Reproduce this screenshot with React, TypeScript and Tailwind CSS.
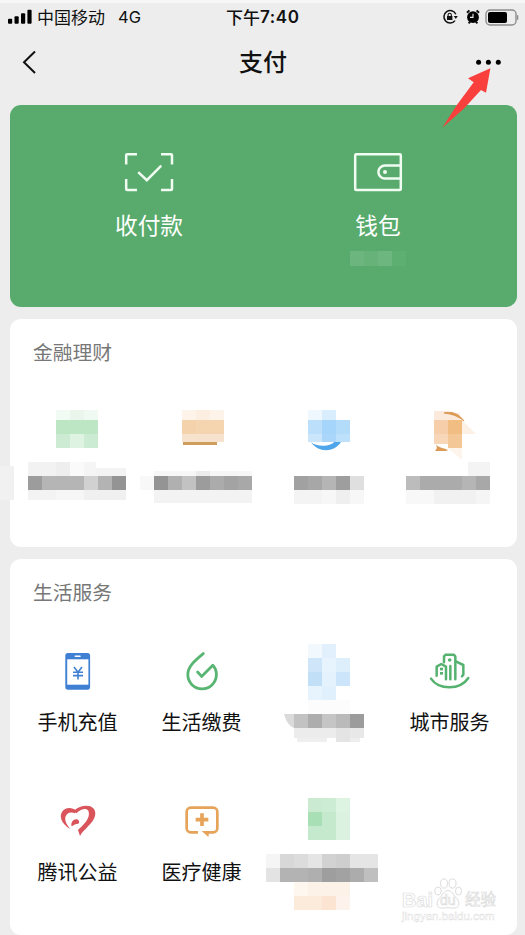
import type { ReactNode } from "react";

// x, y, width, height, fill
type Block = [number, number, number, number, string];

const MosaicTile = ({
  blocks,
  height,
  children,
}: {
  blocks: Block[];
  height: number;
  children?: ReactNode;
}) => (
  <svg
    width="124"
    height={height}
    viewBox={`0 0 124 ${height}`}
    className="block"
    shapeRendering="crispEdges"
  >
    {blocks.map(([x, y, w, h, fill], i) => (
      <rect key={i} x={x} y={y} width={w} height={h} fill={fill} />
    ))}
    <g shapeRendering="auto">{children}</g>
  </svg>
);

const financeOne: Block[] = [
  [41, 10, 14, 10, "#f1faf3"],
  [55, 10, 14, 10, "#eaf6ec"],
  [69, 10, 14, 10, "#f0f9f2"],
  [41, 20, 42, 14, "#bce6c4"],
  [41, 34, 14, 14, "#cdebd3"],
  [55, 34, 14, 14, "#dff3e3"],
  [69, 34, 14, 14, "#cbebd2"],
  [13, 62, 28, 14, "#f2f2f2"],
  [41, 62, 14, 14, "#eeeeee"],
  [55, 62, 14, 14, "#fafafa"],
  [69, 62, 12, 14, "#f5f5f5"],
  [81, 68, 30, 8, "#f3f3f3"],
  [13, 76, 14, 14, "#9c9c9c"],
  [27, 76, 42, 14, "#b5b5b5"],
  [69, 76, 14, 14, "#d1d1d1"],
  [83, 76, 14, 14, "#b3b3b3"],
  [97, 76, 14, 14, "#949494"],
  [13, 90, 28, 10, "#f3f3f3"],
  [41, 90, 28, 10, "#f6f6f6"],
  [69, 90, 42, 10, "#f0f0f0"],
];

const financeTwo: Block[] = [
  [43, 10, 14, 10, "#fef4ea"],
  [57, 10, 14, 10, "#fcefe2"],
  [71, 10, 14, 10, "#fef3e8"],
  [43, 20, 14, 14, "#f4d2ac"],
  [57, 20, 28, 14, "#f5d5b0"],
  [43, 34, 42, 8, "#f7e2cd"],
  [44, 42, 34, 3, "#cf9d5e"],
  [15, 71, 42, 5, "#f7f7f7"],
  [57, 71, 14, 5, "#ececec"],
  [71, 71, 42, 5, "#f6f6f6"],
  [1, 76, 14, 14, "#f8f8f8"],
  [15, 76, 14, 14, "#949494"],
  [29, 76, 14, 14, "#b0b0b0"],
  [43, 76, 14, 14, "#c2c2c2"],
  [57, 76, 14, 14, "#9c9c9c"],
  [71, 76, 14, 14, "#ababab"],
  [85, 76, 14, 14, "#a3a3a3"],
  [99, 76, 14, 14, "#a8a8a8"],
  [15, 90, 98, 13, "#f3f3f3"],
];

const financeThree: Block[] = [
  [45, 10, 14, 10, "#eff8fe"],
  [59, 10, 14, 10, "#d8edfd"],
  [45, 20, 14, 14, "#bcdffb"],
  [59, 20, 14, 14, "#a5d5fa"],
  [73, 20, 14, 14, "#b3dbfa"],
  [45, 34, 14, 8, "#cbe5fa"],
  [59, 34, 14, 8, "#a9d6fa"],
  [73, 34, 14, 8, "#bde0fb"],
  [31, 76, 14, 14, "#a1a1a1"],
  [45, 76, 14, 14, "#a7a7a7"],
  [59, 76, 14, 14, "#b5b5b5"],
  [73, 76, 14, 14, "#9e9e9e"],
  [87, 76, 14, 14, "#dfdfdf"],
  [31, 90, 28, 14, "#f4f4f4"],
  [59, 90, 14, 14, "#f7f7f7"],
  [73, 90, 14, 14, "#efefef"],
  [87, 90, 14, 14, "#f7f7f7"],
];

const financeFour: Block[] = [
  [47, 11, 14, 9, "#fbeadb"],
  [61, 13, 12, 7, "#fbeadb"],
  [47, 20, 14, 14, "#f6cfaa"],
  [61, 20, 14, 14, "#f1bd83"],
  [47, 34, 14, 10, "#f7d7b7"],
  [61, 34, 14, 14, "#f3c796"],
  [81, 62, 22, 14, "#f4f4f4"],
  [19, 76, 14, 14, "#bcbcbc"],
  [33, 76, 42, 14, "#ababab"],
  [75, 76, 14, 14, "#b5b5b5"],
  [89, 76, 14, 14, "#a8a8a8"],
  [19, 90, 28, 14, "#f8f8f8"],
  [47, 90, 42, 14, "#f1f1f1"],
  [89, 90, 14, 14, "#f5f5f5"],
];

const serviceThree: Block[] = [
  [45, 4, 14, 14, "#f2f9fe"],
  [59, 4, 14, 14, "#e1f0fc"],
  [45, 18, 14, 14, "#cee5fa"],
  [59, 18, 14, 14, "#e8f4fd"],
  [73, 18, 14, 14, "#deeffc"],
  [45, 32, 14, 14, "#c2dff8"],
  [59, 32, 14, 14, "#e4f2fd"],
  [73, 32, 14, 14, "#cce5fb"],
  [45, 46, 14, 14, "#e8f4fd"],
  [59, 46, 14, 14, "#e0f0fc"],
  [45, 60, 42, 14, "#fcfcfc"],
  [31, 74, 14, 14, "#c2c2c2"],
  [45, 74, 14, 14, "#adadad"],
  [59, 74, 14, 14, "#c5c5c5"],
  [73, 74, 14, 14, "#bababa"],
  [87, 74, 14, 14, "#9c9c9c"],
  [31, 88, 42, 10, "#ececec"],
  [73, 88, 14, 14, "#e4e4e4"],
  [87, 88, 14, 10, "#e8e8e8"],
  [34, 98, 30, 4, "#efefef"],
  [87, 98, 10, 4, "#eeeeee"],
];

const serviceSeven: Block[] = [
  [45, 8, 14, 14, "#caebd1"],
  [59, 8, 14, 14, "#cdecd4"],
  [73, 8, 14, 14, "#def4e2"],
  [45, 22, 14, 14, "#a9dfb5"],
  [59, 22, 14, 14, "#c4e9cc"],
  [73, 22, 14, 14, "#daf2df"],
  [45, 36, 28, 14, "#c5e9cd"],
  [73, 36, 14, 14, "#dcf2e0"],
  [3, 64, 14, 14, "#f5f5f5"],
  [17, 64, 14, 14, "#d8d8d8"],
  [31, 64, 14, 14, "#dcdcdc"],
  [45, 64, 14, 14, "#e5e5e5"],
  [59, 64, 14, 14, "#d2d2d2"],
  [73, 64, 14, 14, "#cecece"],
  [87, 64, 28, 14, "#e5e5e5"],
  [3, 78, 14, 14, "#e3e3e3"],
  [17, 78, 28, 14, "#b3b3b3"],
  [45, 78, 14, 14, "#afafaf"],
  [59, 78, 14, 14, "#9e9e9e"],
  [73, 78, 14, 14, "#a2a2a2"],
  [87, 78, 14, 14, "#acacac"],
  [101, 78, 14, 14, "#bfbfbf"],
  [31, 92, 14, 14, "#fef7f0"],
  [45, 92, 42, 14, "#fdf2e7"],
  [31, 106, 28, 14, "#fcebda"],
  [59, 106, 14, 14, "#fce4d2"],
  [73, 106, 14, 14, "#fef3ec"],
];

const PhoneIcon = () => (
  <svg width="44" height="44" viewBox="0 0 44 44">
    <rect x="10.3" y="4" width="24.8" height="36.7" rx="2.6" fill="#3f80d4" />
    <rect x="12.2" y="10.3" width="21.2" height="25.4" fill="#fff" />
    <path d="M20.3 7.2H25" stroke="#fff" strokeWidth="1.5" strokeLinecap="round" />
    <path
      d="M19 18l4 5.2 4-5.2M23 23v7.5M18 23.2h10M18 26.6h10"
      fill="none"
      stroke="#3f80d4"
      strokeWidth="1.6"
    />
  </svg>
);

const DropIcon = () => (
  <svg width="44" height="44" viewBox="0 0 44 44">
    <path
      d="M24.3 4.6C16 11.4 8.8 17.5 8.8 25.6a14.3 14.3 0 0 0 28.6 0c0-3.6-1.3-6.9-3.6-9.3L22.6 27.4l-4-4.4"
      fill="none"
      stroke="#58b572"
      strokeWidth="2.8"
      strokeLinecap="round"
      strokeLinejoin="round"
    />
  </svg>
);

const CityIcon = () => (
  <svg width="44" height="44" viewBox="0 0 132 132">
    <g
      fill="none"
      stroke="#55b26f"
      strokeWidth="7.5"
      strokeLinecap="round"
      strokeLinejoin="round"
    >
      <path d="M12 89c24 35 87 35 112-2" />
      <path d="M29 80V53l14-8 14 8v38" />
      <path d="M51 40V22l5-5h24l5 5v69M70 51v40" />
      <path d="M88 38l21 10v29l-4 5" />
    </g>
    <g fill="#55b26f">
      <circle cx="68" cy="33" r="5.5" />
      <rect x="39" y="56" width="9" height="8" />
      <rect x="39" y="69" width="9" height="8" />
    </g>
  </svg>
);

const HeartIcon = () => (
  <svg width="44" height="44" viewBox="0 0 132 132" fill="#d9545b">
    <path d="M64 36C52 24 32 25 23 36 11 50 18 74 46 90 36 78 29 68 31 55 34 42 46 37 60 43z" />
    <path d="M57 35c14-14 36-18 49-13 18 8 19 27 7 44-10 15-28 27-38 45l-6-18c14-13 28-26 32-42 3-14-3-22-13-21-10 1-17 7-24 13z" />
    <path d="M56 63c5-4 14-3 16 3 2 6-2 10-8 9-4 0-7 4-14 7-3-6 0-15 6-19z" />
  </svg>
);

const MedicalIcon = () => (
  <svg width="44" height="44" viewBox="0 0 132 132">
    <path
      d="M57 100H35a12 12 0 0 1-12-12V38a12 12 0 0 1 12-12h68a12 12 0 0 1 12 12v50a12 12 0 0 1-12 12H84"
      fill="none"
      stroke="#e6a35a"
      strokeWidth="8"
    />
    <path d="M68 96h23l-3 18z" fill="#e6a35a" />
    <path d="M69 43v38M50 62h38" stroke="#e6a35a" strokeWidth="11" />
  </svg>
);

const services = [
  { name: "手机充值", icon: <PhoneIcon /> },
  { name: "生活缴费", icon: <DropIcon /> },
  { blocks: serviceThree },
  { name: "城市服务", icon: <CityIcon /> },
  { name: "腾讯公益", icon: <HeartIcon /> },
  { name: "医疗健康", icon: <MedicalIcon /> },
  { blocks: serviceSeven },
];

const StatusBar = () => (
  <div className="flex h-[35px] items-center border-t-[3px] border-[#f7f7f7] pb-[4px] pl-2 text-[17px] leading-none text-[#111]">
    <svg width="25" height="16" viewBox="0 0 25 16" className="shrink-0">
      <rect x="0" y="9.7" width="4.2" height="5" rx="1" />
      <rect x="6.5" y="7.2" width="4.2" height="7.5" rx="1" />
      <rect x="13" y="4.2" width="4.2" height="10.5" rx="1" />
      <rect x="19.4" y="0.7" width="4.2" height="14" rx="1" />
    </svg>
    <div className="-mt-[2px] ml-[4px] w-[81px] whitespace-nowrap">中国移动</div>
    <div className="w-[108px] font-['Inter','Noto_Sans_CJK_SC',sans-serif] text-[16.5px]">
      4G
    </div>
    <div className="flex w-[216px] items-center font-medium">
      <span className="-mt-[2px]">下午</span>
      <span className="font-['Inter',sans-serif] text-[17px] font-semibold tracking-[0.6px]">
        7:40
      </span>
    </div>
    <svg width="16" height="16" viewBox="0 0 16 16" fill="none" stroke="#111">
      <path d="M13.8 5.2A6.2 6.2 0 1 0 13 11.6" strokeWidth="1.5" />
      <path d="M11.8 7h4l-2 3z" fill="#111" stroke="none" />
      <rect x="5" y="7" width="5.4" height="4" fill="#111" stroke="none" />
      <path d="M6.1 7.2V5.8a1.6 1.6 0 0 1 3.2 0v1.4" strokeWidth="1.1" />
    </svg>
    <svg width="14" height="16" viewBox="0 0 14 16" className="ml-[8px]">
      <circle cx="7" cy="8.2" r="5.9" />
      <path
        d="M1 3.8l2.4-2.4M13 3.8l-2.4-2.4M2.6 14.4l1.8-2M11.4 14.4l-1.8-2"
        stroke="#111"
        strokeWidth="2"
      />
      <path d="M7 4.8v3.6H4" fill="none" stroke="#ededed" strokeWidth="1.1" />
    </svg>
    <svg width="34" height="17" viewBox="0 0 34 17" className="ml-[5px]">
      <rect
        x="1"
        y="1"
        width="30"
        height="15"
        rx="4"
        fill="none"
        stroke="#8d8d8d"
        strokeWidth="1.4"
      />
      <rect x="3" y="3" width="19" height="11" rx="2" />
      <path d="M32.6 6.2v4.6" stroke="#8d8d8d" strokeWidth="1.4" />
    </svg>
  </div>
);

const App = () => {
  return (
    <div className="relative h-[935px] w-[525px] overflow-hidden bg-[#ededed] font-['Noto_Sans_CJK_SC',sans-serif]">
      <StatusBar />

      <header className="flex h-[70px] items-start justify-between pr-[22px] pl-[22px] pt-[13px]">
        <svg width="48" height="28" viewBox="0 0 48 28" fill="none">
          <path d="M13 3.5L2 14.2 13 25" stroke="#111" strokeWidth="2" />
        </svg>
        <h1 className="-mt-px pl-px text-2xl leading-[28px] font-medium text-[#111]">
          支付
        </h1>
        <svg width="48" height="28" viewBox="0 0 48 28">
          <circle cx="23.6" cy="14.3" r="2.5" />
          <circle cx="33.4" cy="14.3" r="2.5" />
          <circle cx="43.3" cy="14.3" r="2.5" />
        </svg>
      </header>

      <main className="flex flex-col gap-3 pl-[10px]">
        <section className="flex h-[202px] w-[507px] rounded-[11px] bg-[#58ab6c] pl-[25px] text-[22.7px] leading-[30px] text-white">
          <div className="flex w-[228px] flex-col items-center pt-[47px]">
            <svg
              width="50"
              height="40"
              viewBox="0 0 50 40"
              fill="none"
              stroke="#f0fbf2"
              strokeWidth="2.5"
            >
              <path d="M2.2 12.6V3.2a1 1 0 0 1 1-1H13M37 2.2h10a1 1 0 0 1 1 1v9.4M48 27v10a1 1 0 0 1-1 1H37M13 38H3.2a1 1 0 0 1-1-1V27" />
              <path d="M14.2 20.2l8.6 8 14.5-14.6" />
            </svg>
            <div className="mt-[18px]">收付款</div>
          </div>
          <div className="flex w-[230px] flex-col items-center pt-[47px]">
            <svg
              width="50"
              height="40"
              viewBox="0 0 50 40"
              fill="none"
              stroke="#f0fbf2"
              strokeWidth="2.5"
            >
              <rect x="2.2" y="2.2" width="45.6" height="35.8" rx="1" />
              <path d="M47.8 13.4H32a6.6 6.6 0 0 0 0 13.2h15.8" />
              <circle cx="32" cy="20" r="2" fill="#f0fbf2" stroke="none" />
            </svg>
            <div className="mt-[18px]">钱包</div>
            <div className="mt-[11px] flex h-[15px] w-[56px]">
              <div className="w-[14px] bg-[#6cb57e]" />
              <div className="w-[14px] bg-[#66b279]" />
              <div className="w-[14px] bg-[#6eb680]" />
              <div className="w-[14px] bg-[#5dae71]" />
            </div>
          </div>
        </section>

        <section className="h-[228px] w-[507px] rounded-[11px] bg-white">
          <h2 className="pt-[21px] pl-[23px] text-[19.8px] leading-6 text-[#777]">
            金融理财
          </h2>
          <div className="mt-[36px] grid grid-cols-4 pr-[6px] pl-[5px]">
            <MosaicTile blocks={financeOne} height={110} />
            <MosaicTile blocks={financeTwo} height={110} />
            <MosaicTile blocks={financeThree} height={110}>
              <path
                d="M48 42c5 5 19 5 23 0h7c-7 11-23 11-30 0z"
                fill="#4fa6ea"
              />
            </MosaicTile>
            <MosaicTile blocks={financeFour} height={110}>
              <path d="M75 20l14 14H75z" fill="#fcf1e4" />
              <path d="M61 48h14v12z" fill="#fdf5ec" />
              <path
                d="M57 13c7-2 14 0 20 8-6-5-12-7-20-8z"
                fill="#dc9a55"
                stroke="#dc9a55"
              />
              <path d="M48 51l2-3-1-3c4 3 8 3 12 5l-2 1z" fill="#dc9a55" />
            </MosaicTile>
          </div>
        </section>

        <section className="h-[376px] w-[507px] rounded-[11px] bg-white">
          <h2 className="pt-[21px] pl-[23px] text-[19.8px] leading-6 text-[#777]">
            生活服务
          </h2>
          <div className="mt-[36px] grid auto-rows-[150px] grid-cols-4 pr-[6px] pl-[5px]">
            {services.map((item, i) =>
              item.blocks ? (
                <MosaicTile key={i} blocks={item.blocks} height={150}>
                  {i === 2 && (
                    <path d="M21 74h10v14c-5-2-8-7-10-14z" fill="#dadada" />
                  )}
                </MosaicTile>
              ) : (
                <div key={i} className="flex flex-col items-center pt-[9px]">
                  {item.icon}
                  <div className="mt-[17px] pl-px text-[20px] leading-6 whitespace-nowrap text-[#111]">
                    {item.name}
                  </div>
                </div>
              )
            )}
          </div>
        </section>
      </main>

      {/* smudge on the left page edge */}
      <div className="absolute top-[466px] left-0 h-[34px] w-[14px] bg-[#f1f1f1]" />

      {/* pointer to the menu dots */}
      <svg
        width="52"
        height="64"
        viewBox="0 0 52 64"
        className="absolute top-[66px] left-[441px]"
      >
        <path
          d="M49.4 2.2L27 12.3l5.7 4L15.5 39.5 1.3 61.8 23 42.5 40 24l5 2.8z"
          fill="#f9403c"
        />
      </svg>

      {/* watermark */}
      <div className="absolute top-[876px] left-[402px] w-[98px] font-['Liberation_Sans','Noto_Sans_CJK_SC',sans-serif] text-white [-webkit-text-stroke:0.7px_#dcdcdc]">
        <div className="flex h-[34px] items-end leading-none">
          <span className="w-[32px] text-[20px] font-bold">Bai</span>
          <div className="relative h-[34px] w-[28px]">
            <svg
              width="28"
              height="34"
              viewBox="0 0 28 34"
              fill="#fff"
              stroke="#dcdcdc"
            >
              <ellipse cx="4" cy="15" rx="3.3" ry="4" />
              <ellipse cx="10" cy="7.5" rx="3.5" ry="4.6" />
              <ellipse cx="18.5" cy="7.5" rx="3.5" ry="4.6" />
              <ellipse cx="24.5" cy="15" rx="3" ry="4" />
              <path d="M14 14.5c4 0 5 4 8 7 4 4 4 10-1 10.5-3 .5-5-.5-7-.5s-4 1-7 .5c-5-.5-5-6.5-1-10.5 3-3 4-7 8-7z" />
            </svg>
            <span className="absolute top-[17px] left-[6px] text-[14px]">du</span>
          </div>
          <span className="pb-[3px] pl-[3px] text-[15.5px]">经验</span>
        </div>
        <div className="text-[11.5px] leading-[13px] [-webkit-text-stroke:0.4px_#dcdcdc]">
          jingyan.baidu.com
        </div>
      </div>
    </div>
  );
};

export default App;
